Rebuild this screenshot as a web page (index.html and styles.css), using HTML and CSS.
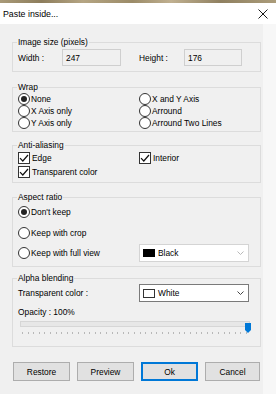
FILE: index.html
```html
<!DOCTYPE html>
<html>
<head>
<meta charset="utf-8">
<link rel="stylesheet" href="styles.css">
</head>
<body>
<div class="strip"></div>
<header class="titlebar">
  <span class="title">Paste inside...</span>
  <svg class="close" width="10" height="10" viewBox="0 0 10 10"><path d="M0.5 0.5L9.5 9.5M9.5 0.5L0.5 9.5" stroke="#1a1a1a" stroke-width="1" fill="none"/></svg>
</header>
<div class="frame">
<main class="dialog">
  <fieldset class="group g-size">
    <legend>Image size (pixels)</legend>
    <div class="size-row">
      <span class="lbl lbl-w">Width :</span><span class="field f-w">247</span>
      <span class="lbl lbl-h">Height :</span><span class="field f-h">176</span>
    </div>
  </fieldset>

  <fieldset class="group g-wrap">
    <legend>Wrap</legend>
    <div class="two-col">
      <div class="opt"><span class="radio on"></span>None</div>
      <div class="opt"><span class="radio"></span>X and Y Axis</div>
      <div class="opt"><span class="radio"></span>X Axis only</div>
      <div class="opt"><span class="radio"></span>Arround</div>
      <div class="opt"><span class="radio"></span>Y Axis only</div>
      <div class="opt"><span class="radio"></span>Arround Two Lines</div>
    </div>
  </fieldset>

  <fieldset class="group g-anti">
    <legend>Anti-aliasing</legend>
    <div class="two-col rows14">
      <div class="opt"><span class="check"><svg width="10" height="10" viewBox="0 0 10 10"><path d="M1 5.2L3.8 8L9 2" stroke="#111" stroke-width="1.2" fill="none"/></svg></span>Edge</div>
      <div class="opt"><span class="check"><svg width="10" height="10" viewBox="0 0 10 10"><path d="M1 5.2L3.8 8L9 2" stroke="#111" stroke-width="1.2" fill="none"/></svg></span>Interior</div>
      <div class="opt"><span class="check"><svg width="10" height="10" viewBox="0 0 10 10"><path d="M1 5.2L3.8 8L9 2" stroke="#111" stroke-width="1.2" fill="none"/></svg></span>Transparent color</div>
    </div>
  </fieldset>

  <fieldset class="group g-aspect">
    <legend>Aspect ratio</legend>
    <div class="aspect">
      <div class="opt arow"><span class="radio on"></span>Don't keep</div>
      <div class="opt arow"><span class="radio"></span>Keep with crop</div>
      <div class="arow last">
        <div class="opt"><span class="radio"></span>Keep with full view</div>
        <div class="combo disabled"><span class="swatch black"></span><span class="ctext">Black</span><svg class="chev" width="7" height="4" viewBox="0 0 7 4"><path d="M0.5 0.5L3.5 3.5L6.5 0.5" stroke="#b9b9b9" fill="none"/></svg></div>
      </div>
    </div>
  </fieldset>

  <fieldset class="group g-alpha">
    <legend>Alpha blending</legend>
    <div class="alpha-row">
      <span class="lbl">Transparent color :</span>
      <div class="combo"><span class="swatch white"></span><span class="ctext">White</span><svg class="chev" width="7" height="4" viewBox="0 0 7 4"><path d="M0.5 0.5L3.5 3.5L6.5 0.5" stroke="#444" fill="none"/></svg></div>
    </div>
    <div class="opacity">Opacity : 100%</div>
    <div class="slider">
      <div class="track"></div>
      <svg class="thumb" width="6" height="10" viewBox="0 0 6 10"><path d="M0 0H6V7L3 10L0 7Z" fill="#0078d7"/></svg>
      <div class="ticks"></div>
    </div>
  </fieldset>

  <div class="buttons">
    <button class="btn">Restore</button>
    <button class="btn">Preview</button>
    <button class="btn default">Ok</button>
    <button class="btn last">Cancel</button>
  </div>
</main>
</div>
</body>
</html>
```

FILE: styles.css
```css
* { box-sizing: border-box; }
html, body { margin: 0; padding: 0; }
body {
  width: 276px;
  height: 394px;
  overflow: hidden;
  font-family: "Liberation Sans", Arial, sans-serif;
  font-size: 8.4px;
  color: #000;
  background: #f7f7f7;
}
.strip {
  height: 3px;
  background: linear-gradient(90deg, #a99a78 0%, #8d7d5c 15%, #b5a583 30%, #9b8b68 48%, #c0b090 62%, #8f8060 80%, #ab9c7a 100%);
}
.titlebar {
  height: 21px;
  background: #fff;
  display: flex;
  align-items: center;
  justify-content: space-between;
  padding: 0 8px 0 3px;
}
.title { font-size: 8.8px; color: #000; }
.close { display: block; }
.frame { height: 370px; }
.dialog {
  width: 263px;
  height: 370px;
  background: #f0f0f0;
  padding: 12px 0 0 12px;
}
.group {
  width: 249px;
  margin: 0;
  padding: 0 5px;
  border: 1px solid #dcdcdc;
  min-inline-size: 0;
}
.group legend {
  padding: 0 1px;
  margin-left: -1px;
  line-height: 12px;
  font-size: 8.4px;
}
.g-size { padding-top: 1px; padding-bottom: 5px; }
.g-wrap { margin-top: 9px; padding-bottom: 2px; }
.g-anti { margin-top: 7px; padding-bottom: 3px; }
.g-aspect { margin-top: 8px; padding-bottom: 4px; }
.g-alpha { margin-top: 5px; padding-bottom: 12px; }

.size-row { display: flex; align-items: center; height: 17px; }
.lbl-w { width: 44px; }
.lbl-h { width: 45px; margin-left: 18px; }
.field {
  height: 17px;
  background: #f0f0f0;
  border: 1px solid #cfcfcf;
  padding: 0 3px;
  display: flex;
  align-items: center;
}
.f-w { width: 59px; }
.f-h { width: 58px; }

.two-col {
  display: grid;
  grid-template-columns: 121px 1fr;
  grid-auto-rows: 12px;
}
.two-col.rows14 { grid-auto-rows: 14px; }
.opt { display: flex; align-items: center; white-space: nowrap; }
.radio {
  width: 12px;
  height: 12px;
  border: 1px solid #333;
  border-radius: 50%;
  background: #fff;
  margin-right: 1px;
  display: flex;
  align-items: center;
  justify-content: center;
  flex: none;
}
.radio.on::after {
  content: "";
  width: 6px;
  height: 6px;
  border-radius: 50%;
  background: #222;
}
.check {
  width: 12px;
  height: 12px;
  border: 1px solid #333;
  background: #fff;
  margin-right: 2px;
  display: flex;
  align-items: center;
  justify-content: center;
  flex: none;
}
.check svg { display: block; }

.aspect { display: flex; flex-direction: column; gap: 2.5px; }
.arow { height: 18px; }
.arow.last {
  display: grid;
  grid-template-columns: 121px 110px;
  align-items: center;
}
.combo {
  height: 18px;
  width: 110px;
  background: #fff;
  border: 1px solid #7a7a7a;
  display: flex;
  align-items: center;
  padding: 0 4px 0 3px;
}
.combo.disabled { border-color: #d4d4d4; }
.swatch { width: 12px; height: 8px; flex: none; }
.swatch.black { background: #000; }
.swatch.white { background: #fff; border: 1px solid #333; height: 9px; }
.ctext { margin-left: 3px; flex: 1; }
.chev { display: block; flex: none; }

.alpha-row {
  display: grid;
  grid-template-columns: 121px 110px;
  align-items: center;
  height: 17px;
}
.alpha-row .combo { height: 18px; }
.opacity { margin-top: 5px; line-height: 12px; }
.slider { position: relative; margin-left: 2px; width: 230px; }
.track {
  margin-top: 3px;
  height: 6px;
  background: #e7e7e7;
  border: 1px solid #d6d6d6;
}
.thumb { position: absolute; left: 225px; top: 2px; display: block; }
.ticks {
  margin-top: 5px;
  margin-left: 2px;
  width: 226px;
  height: 2px;
  background: repeating-linear-gradient(90deg, #b8b8b8 0 1px, transparent 1px 5.6px);
}

.buttons {
  display: flex;
  gap: 7px;
  margin-top: 15px;
  margin-left: 1px;
}
.btn {
  width: 57px;
  height: 19px;
  background: #e1e1e1;
  border: 1px solid #adadad;
  font-family: "Liberation Sans", Arial, sans-serif;
  font-size: 8.4px;
  color: #000;
  padding: 0;
  margin: 0;
}
.btn.default { border: 2px solid #0078d7; }
.btn.last { width: 55px; }
```
